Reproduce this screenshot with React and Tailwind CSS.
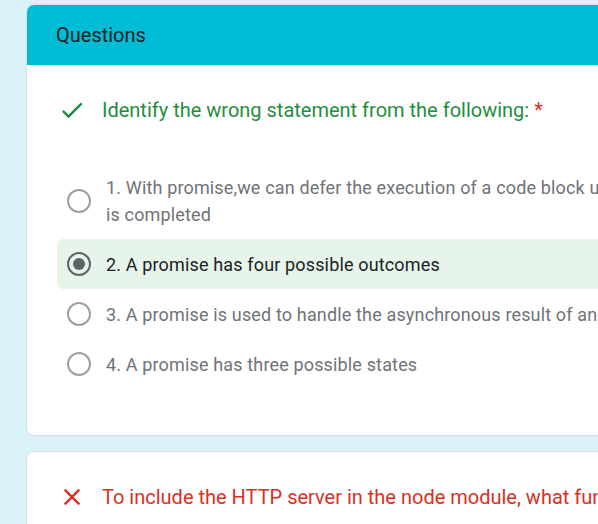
import React from "react";

const OPTIONS = [
  {
    id: 1,
    lines: ["1. With promise,we can defer the execution of a code block until the async request", "is completed"],
  },
  { id: 2, lines: ["2. A promise has four possible outcomes"], checked: true },
  { id: 3, lines: ["3. A promise is used to handle the asynchronous result of an operation"] },
  { id: 4, lines: ["4. A promise has three possible states"] },
];

function CheckIcon() {
  return (
    <svg viewBox="0 0 24 24" className="h-7 w-7 shrink-0" fill="#1e8e3e">
      <path d="M9 16.17L4.83 12l-1.42 1.41L9 19 21 7l-1.41-1.41z" />
    </svg>
  );
}

function CrossIcon() {
  return (
    <svg viewBox="0 0 24 24" className="h-7 w-7 shrink-0" fill="#d93025">
      <path d="M19 6.41L17.59 5 12 10.59 6.41 5 5 6.41 10.59 12 5 17.59 6.41 19 12 13.41 17.59 19 19 17.59 13.41 12z" />
    </svg>
  );
}

function Radio({ checked }) {
  return (
    <span
      className={`flex h-6 w-6 shrink-0 items-center justify-center rounded-full border-2 ${
        checked ? "border-[#5f6368]" : "border-[#9aa0a6]"
      }`}
    >
      {checked && <span className="h-3 w-3 rounded-full bg-[#5f6368]" />}
    </span>
  );
}

function Option({ lines, checked }) {
  return (
    <div
      className={`flex items-center rounded-md py-[11.5px] pl-[10px] ${
        checked ? "bg-[#e6f4ea]" : ""
      }`}
    >
      <Radio checked={checked} />
      <p
        className={`ml-[15px] whitespace-nowrap text-[18px] leading-[27px] tracking-[0.15px] ${
          checked ? "text-[#202124]" : "text-[#6f7378]"
        }`}
      >
        {lines.map((l, i) => (
          <React.Fragment key={i}>
            {i > 0 && <br />}
            {l}
          </React.Fragment>
        ))}
      </p>
    </div>
  );
}

export default function App() {
  return (
    <div
      className="h-[524px] overflow-hidden bg-[#d9f3f8] pl-[26px] pt-[4px]"
      style={{ fontFamily: "Roboto, 'Noto Sans', sans-serif" }}
    >
      <div className="w-[800px]">
        {/* Questions card */}
        <div className="overflow-hidden rounded-lg border border-[#dadce0] bg-white">
          <div className="flex h-[60px] items-center bg-[#00bcd4] pl-[29px] text-[20px] text-[#202124]">
            Questions
          </div>
          <div className="pb-[46px] pl-[30px] pt-[31px]">
            <div className="flex items-center pl-[1px]">
              <CheckIcon />
              <p className="ml-[16px] text-[20px] leading-6 text-[#1e8e3e]">
                Identify the wrong statement from the following:{" "}
                <span className="text-[#d93025]">*</span>
              </p>
            </div>
            <div className="mt-[38px] flex flex-col">
              {OPTIONS.map((o) => (
                <Option key={o.id} lines={o.lines} checked={o.checked} />
              ))}
            </div>
          </div>
        </div>

        {/* Next card */}
        <div className="mt-[15px] h-[200px] rounded-lg border border-[#dadce0] bg-white pl-[31px] pt-[31px]">
          <div className="flex items-center">
            <CrossIcon />
            <p className="ml-[16px] whitespace-nowrap text-[20px] leading-6 text-[#d93025]">
              To include the HTTP server in the node module, what function do we use?
            </p>
          </div>
        </div>
      </div>
    </div>
  );
}
